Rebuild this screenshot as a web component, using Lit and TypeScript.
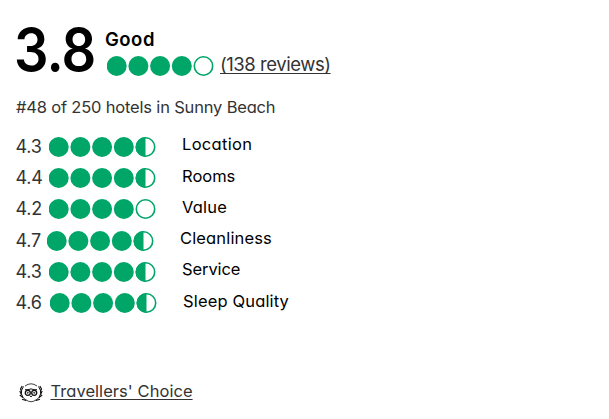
import { LitElement, html, css, svg } from "lit";
import { customElement, property } from "lit/decorators.js";

@customElement("bubble-rating")
class BubbleRating extends LitElement {
  @property({ type: Number }) value = 0;

  static styles = css`
    :host { display: block; flex: none; width: 108px; height: 20px; }
    svg { display: block; }
    .fill { fill: #00a568; }
    .ring { fill: #fff; stroke: #00a568; stroke-width: 1.6; }
  `;

  render() {
    return html`<svg width="108" height="20" viewBox="0 0 108 20">
      ${[0, 1, 2, 3, 4].map((i) => {
        const cx = 9.7 + i * 21.7;
        const part = this.value - i;
        if (part >= 1) return svg`<circle class="fill" cx=${cx} cy="10" r="10"></circle>`;
        return svg`<circle class="ring" cx=${cx} cy="10" r="9.2"></circle>
          ${part > 0 ? svg`<path class="fill" d="M${cx} 0a10 10 0 0 0 0 20z"></path>` : ""}`;
      })}
    </svg>`;
  }
}

interface Row {
  score: string;
  bubbles: number;
  label: string;
  scoreWidth: number;
  spacing: number;
  drop: number;
}

const rows: Row[] = [
  { score: "4.3", bubbles: 4.5, label: "Location", scoreWidth: 33, spacing: 0.3, drop: -3 },
  { score: "4.4", bubbles: 4.5, label: "Rooms", scoreWidth: 33, spacing: 0, drop: -2 },
  { score: "4.2", bubbles: 4, label: "Value", scoreWidth: 33, spacing: 0.2, drop: -2 },
  { score: "4.7", bubbles: 4.5, label: "Cleanliness", scoreWidth: 31, spacing: 0.15, drop: -3 },
  { score: "4.3", bubbles: 4.5, label: "Service", scoreWidth: 33, spacing: -0.1, drop: -3 },
  { score: "4.6", bubbles: 4.5, label: "Sleep Quality", scoreWidth: 34, spacing: 0.15, drop: -2 },
];

@customElement("app-root")
class AppRoot extends LitElement {
  static styles = css`
    :host {
      display: block;
      box-sizing: border-box;
      width: 609px;
      height: 419px;
      padding: 26px 0 0 16px;
      background: #fff;
      color: #333;
      font-family: Inter, "Liberation Sans", sans-serif;
      font-feature-settings: "cv11";
      overflow: hidden;
      white-space: nowrap;
    }
    .head { display: flex; height: 60px; color: #000; }
    .overall { width: 89px; font-size: 59px; line-height: 47px; font-weight: 600; letter-spacing: -1px; margin-left: -2px; margin-right: 2px; transform: scaleX(0.92); transform-origin: left; }
    .grade { font-size: 18.5px; line-height: 26px; font-weight: 600; letter-spacing: 0.5px; }
    .line { display: flex; margin: 4px 0 0 2px; }
    .reviews { margin-left: 5px; margin-top: -2px; font-size: 18.5px; line-height: 20px; letter-spacing: -0.45px; }
    .link { color: #333; text-decoration: underline; text-decoration-thickness: 1px; text-underline-offset: 2px; text-decoration-skip-ink: none; }
    .rank { margin-top: 11px; font-size: 16.5px; line-height: 20px; letter-spacing: -0.18px; }
    .rows { display: grid; grid-template-rows: 31px 31px 32px 31px 31px 31px; margin-top: 20px; }
    .row { display: flex; }
    .score { flex: none; font-size: 18px; line-height: 20px; letter-spacing: -0.2px; text-indent: -0.6px; }
    .label { margin: 0 0 0 25px; font-size: 16.5px; line-height: 20px; color: #000; }
    .award { display: flex; margin: 57px 0 0 3px; }
    .award svg { flex: none; margin-top: 2px; }
    .choice { margin-left: 8px; font-size: 16.5px; line-height: 20px; letter-spacing: 0.05px; text-indent: -0.5px; }
  `;

  render() {
    return html`
      <div class="head">
        <div class="overall">3.8</div>
        <div>
          <div class="grade">Good</div>
          <div class="line">
            <bubble-rating .value=${4}></bubble-rating>
            <a class="reviews link">(138 reviews)</a>
          </div>
        </div>
      </div>
      <div class="rank">#48 of 250 hotels in Sunny Beach</div>
      <div class="rows">
        ${rows.map((r) => html`<div class="row">
          <span class="score" style="width:${r.scoreWidth}px">${r.score}</span>
          <bubble-rating .value=${r.bubbles}></bubble-rating>
          <span class="label" style="letter-spacing:${r.spacing}px;margin-top:${r.drop}px">${r.label}</span>
        </div>`)}
      </div>
      <div class="award">
        <svg width="24" height="20" viewBox="0 0 24 20" fill="none" stroke="#111" stroke-width="1">
          <path d="M6 3Q12-1.4 18 3M6.500 16.500Q12 21 17.500 16.500" stroke-width=".8"></path>
          <path d="M4.500 3.500Q-1 11 7 17.500M19.500 3.500Q25 11 17 17.500"></path>
          <path d="M3.200 3 1.500 6 2.500 8M.8 8l1.700 3.500M.8 12 4 14.500M3 16.200l4 1.300M20.800 3l1.700 3-1 2M23.200 8l-1.700 3.500M23.200 12 20 14.500M21 16.200l-4 1.300" stroke-width="1.2"></path>
          <path d="M6 6.700h3Q12 5 15 6.700h3M10.800 12.500l1.200 1.500 1.200-1.500"></path>
          <circle cx="8.800" cy="9.800" r="2.500" stroke-width="1.300"></circle>
          <circle cx="15.200" cy="9.800" r="2.500" stroke-width="1.300"></circle>
          <circle cx="8.800" cy="9.800" r=".5"></circle>
          <circle cx="15.200" cy="9.800" r=".5"></circle>
        </svg>
        <a class="choice link">Travellers' Choice</a>
      </div>
    `;
  }
}
